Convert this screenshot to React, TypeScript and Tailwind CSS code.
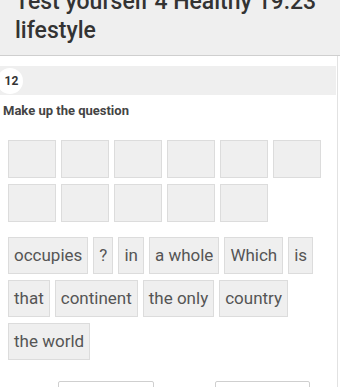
import React from "react";

const words1 = ["occupies", "?", "in", "a whole", "Which", "is", "that", "continent", "the only", "country", "the world"];

export default function App() {
  return (
    <div className="w-[340px] h-[387px] overflow-hidden bg-white font-['Roboto','Noto_Sans',sans-serif]">
      <div className="-mt-[23px]">
        <header className="bg-[#efefef] border-b border-[#cfcfcf] pl-[15px] pr-[4px] pt-[10px] pb-[10px] text-[23px] leading-[29px] font-medium text-[#333]">
          Test yourself 4 Healthy 19.23 lifestyle
        </header>
        <div className="border-r border-[#e2e2e2] mr-[2px] pb-[40px]">
          <div className="pt-[10px] pr-[1px]">
            <div className="h-[29px] bg-[#efefef] flex items-center">
              <div className="w-[26px] h-[26px] -ml-[3px] rounded-full bg-white flex items-center justify-center text-[12px] font-bold text-[#333] pl-[3px]">
                12
              </div>
            </div>
          </div>
          <div className="mt-[8px] ml-[3px] text-[13px] leading-[16px] font-bold text-[#444]">
            Make up the question
          </div>
          <div className="mt-[21px] ml-[8px] mr-[10px] flex flex-wrap gap-x-[5px] gap-y-[6px]">
            {Array.from({ length: 11 }).map((_, i) => (
              <div key={i} className="w-[48px] h-[38px] bg-[#efefef] border border-[#dcdcdc]" />
            ))}
          </div>
          <div className="mt-[15px] ml-[8px] flex flex-wrap gap-x-[5px] gap-y-[6px]">
            {words1.map((w, i) => (
              <div
                key={i}
                className="h-[37px] px-[5px] flex items-center bg-[#efefef] border border-[#dcdcdc] text-[17px] text-[#555] whitespace-nowrap"
              >
                {w}
              </div>
            ))}
          </div>
          <div className="mt-[21px] flex pl-[58px] gap-[61px]">
            <div className="w-[96px] h-[32px] bg-white border border-[#cfcfcf] rounded-[2px]" />
            <div className="w-[95px] h-[32px] bg-white border border-[#cfcfcf] rounded-[2px]" />
          </div>
        </div>
      </div>
    </div>
  );
}
